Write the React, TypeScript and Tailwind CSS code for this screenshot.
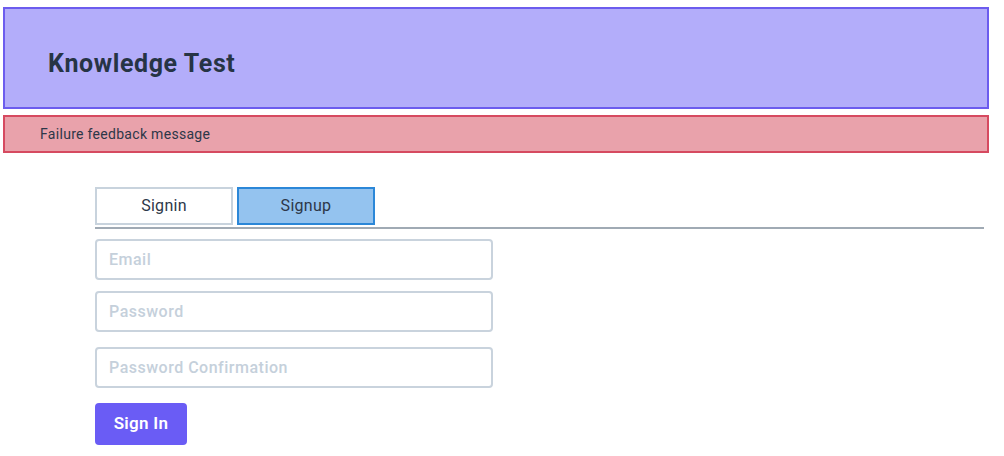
import React, { useState } from 'react';

const font = { fontFamily: 'Roboto, "Noto Sans", sans-serif' };

export default function App() {
  const [tab, setTab] = useState<'signin' | 'signup'>('signup');

  const tabClass = (active: boolean) =>
    active
      ? 'w-[138px] h-[38px] border-2 text-[16px] tracking-[0.3px] border-[#2b87d8] bg-[#94c3ef]'
      : 'w-[138px] h-[38px] border-2 text-[16px] tracking-[0.3px] border-[#c8d3dd] bg-white';

  return (
    <div className="min-h-screen bg-white text-[#2d3748]" style={font}>
      <header className="mt-[7px] ml-[3px] w-[986px] h-[102px] border-2 border-[#6c5cee] bg-[#b3adfa] flex items-center pl-[43px] pt-[12px]">
        <h1 className="text-[25px] font-bold tracking-[0.6px] text-[#263445]">Knowledge Test</h1>
      </header>

      <div className="mt-[6px] ml-[3px] w-[986px] h-[38px] border-2 border-[#d64a60] bg-[#e9a2ab] flex items-center pl-[35px] text-[14px] tracking-[0.3px] text-[#2d3748]">
        Failure feedback message
      </div>

      <div className="mt-[34px] ml-[95px] w-[889px]">
        <div className="flex gap-[4px]">
          <button onClick={() => setTab('signin')} className={tabClass(tab === 'signin')}>
            Signin
          </button>
          <button onClick={() => setTab('signup')} className={tabClass(tab === 'signup')}>
            Signup
          </button>
        </div>
        <div className="mt-[2px] h-[2px] bg-[#a0aab4]" />

        <form className="mt-[10px] flex flex-col items-start" onSubmit={e => e.preventDefault()}>
          <input
            type="email"
            placeholder="Email"
            className="w-[398px] h-[41px] border-2 border-[#c9d3dd] rounded-[4px] px-[12px] text-[16px] font-medium tracking-[0.5px] placeholder:text-[#c5d0db] outline-none"
          />
          <input
            type="password"
            placeholder="Password"
            className="mt-[11px] w-[398px] h-[41px] border-2 border-[#c9d3dd] rounded-[4px] px-[12px] text-[16px] font-medium tracking-[0.5px] placeholder:text-[#c5d0db] outline-none"
          />
          <input
            type="password"
            placeholder="Password Confirmation"
            className="mt-[15px] w-[398px] h-[41px] border-2 border-[#c9d3dd] rounded-[4px] px-[12px] text-[16px] font-medium tracking-[0.5px] placeholder:text-[#c5d0db] outline-none"
          />
          <button
            type="submit"
            className="mt-[15px] w-[92px] h-[42px] rounded-[4px] bg-[#6a5cf5] text-white text-[17px] font-semibold tracking-[0.3px]"
          >
            Sign In
          </button>
        </form>
      </div>
    </div>
  );
}
